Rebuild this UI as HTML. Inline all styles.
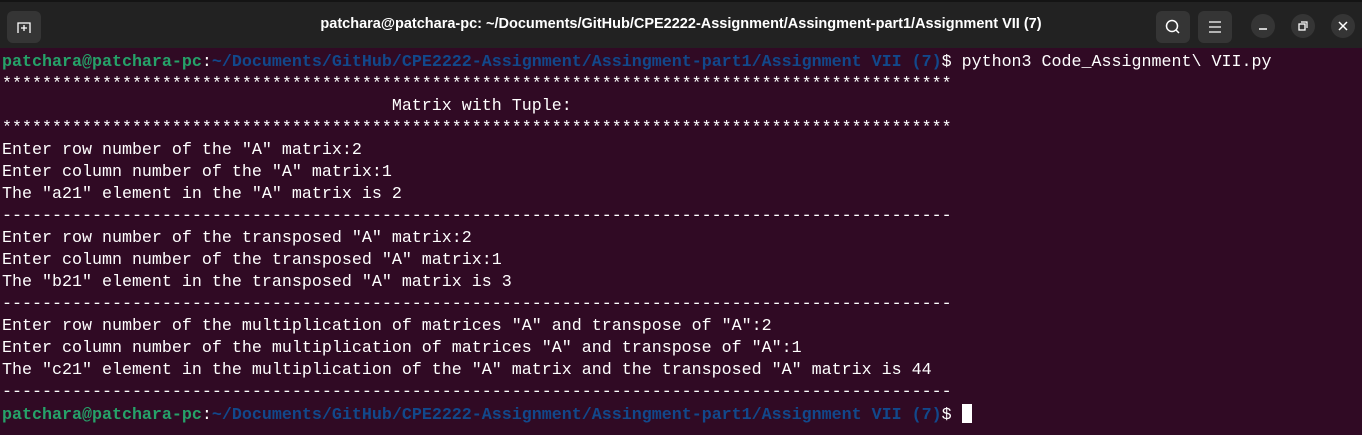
<!DOCTYPE html>
<html><head><style>
html,body{margin:0;padding:0;width:1362px;height:435px;overflow:hidden;background:#300a24}
.tb{position:absolute;left:0;top:0;width:1362px;height:48px;background:#222222;border-top:2px solid #141414;box-sizing:border-box}
.title{position:absolute;left:0;right:0;top:14px;text-align:center;color:#fff;font:bold 14.5px "Liberation Sans",sans-serif}
.btn{position:absolute;top:9px;width:34px;height:32px;background:#353535;border-radius:6px}
.cb{position:absolute;top:12px;width:24px;height:24px;background:#353535;border-radius:50%}
pre{position:absolute;left:2px;top:52px;margin:0;font-family:"Liberation Mono",monospace;font-size:16.67px;line-height:22px;color:#fff}
.g{color:#26a269;font-weight:bold}.b{color:#12488b;font-weight:bold}
.cur{display:inline-block;width:10px;height:19px;background:#fff;vertical-align:-4px}
</style></head><body>
<div class="tb">
<div class="btn" style="left:7px"><svg width="34" height="32"><path d="M11 22V12h12v10M17 14v6M14 17h6" stroke="#fff" stroke-width="1.3" fill="none"/></svg></div>
<div class="title">patchara@patchara-pc: ~/Documents/GitHub/CPE2222-Assignment/Assingment-part1/Assignment VII (7)</div>
<div class="btn" style="left:1156px"><svg width="34" height="32"><circle cx="16" cy="15" r="5.5" stroke="#fff" stroke-width="1.5" fill="none"/><path d="M20 19l3 3" stroke="#fff" stroke-width="1.5"/></svg></div>
<div class="btn" style="left:1198px"><svg width="34" height="32"><path d="M11 11h12M11 16h12M11 21h12" stroke="#fff" stroke-width="1.3"/></svg></div>
<div class="cb" style="left:1251px"><svg width="24" height="24"><path d="M8 15h8" stroke="#fff" stroke-width="1.5"/></svg></div>
<div class="cb" style="left:1291px"><svg width="24" height="24"><rect x="8" y="10" width="6" height="6" stroke="#fff" stroke-width="1.3" fill="none"/><path d="M10 8h6v6" stroke="#fff" stroke-width="1.2" fill="none"/></svg></div>
<div class="cb" style="left:1331px"><svg width="24" height="24"><path d="M8 8l8 8M16 8l-8 8" stroke="#fff" stroke-width="1.5"/></svg></div>
</div>
<pre><span class="g">patchara@patchara-pc</span>:<span class="b">~/Documents/GitHub/CPE2222-Assignment/Assingment-part1/Assignment VII (7)</span>$ python3 Code_Assignment\ VII.py
***********************************************************************************************
                                       Matrix with Tuple:
***********************************************************************************************
Enter row number of the "A" matrix:2
Enter column number of the "A" matrix:1
The "a21" element in the "A" matrix is 2
-----------------------------------------------------------------------------------------------
Enter row number of the transposed "A" matrix:2
Enter column number of the transposed "A" matrix:1
The "b21" element in the transposed "A" matrix is 3
-----------------------------------------------------------------------------------------------
Enter row number of the multiplication of matrices "A" and transpose of "A":2
Enter column number of the multiplication of matrices "A" and transpose of "A":1
The "c21" element in the multiplication of the "A" matrix and the transposed "A" matrix is 44
-----------------------------------------------------------------------------------------------
<span class="g">patchara@patchara-pc</span>:<span class="b">~/Documents/GitHub/CPE2222-Assignment/Assingment-part1/Assignment VII (7)</span>$ <span class="cur"></span></pre>
</body></html>
